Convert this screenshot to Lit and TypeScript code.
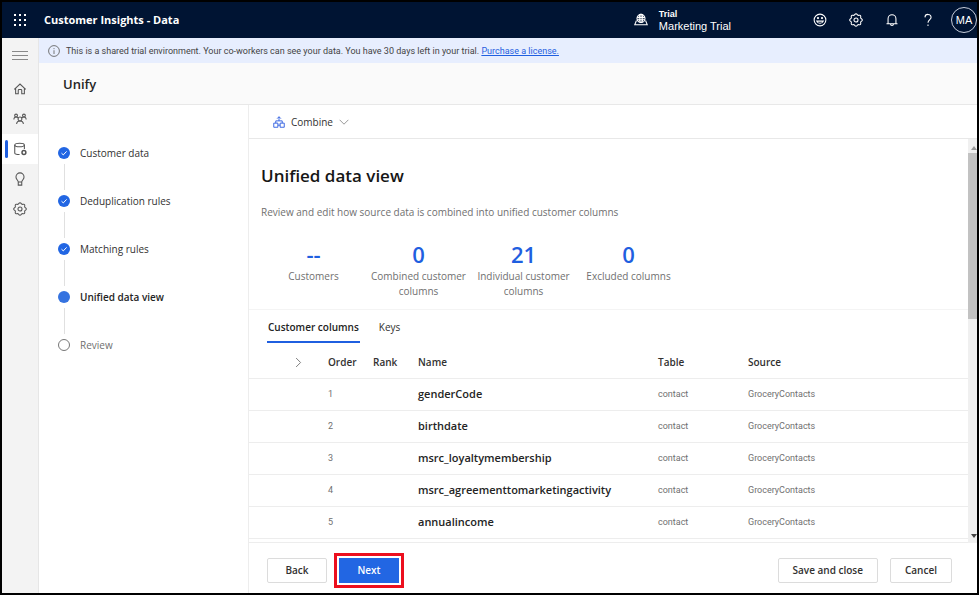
import { LitElement, html, css, svg } from "lit";
import { customElement, state } from "lit/decorators.js";
import { classMap } from "lit/directives/class-map.js";

// Outline of an eight-toothed wheel, traced as a wave around a circle.
const wheel = "M" + Array.from({ length: 64 }, (_, i) => {
  const a = (i * Math.PI) / 32;
  const r = 6.5 + 0.7 * Math.cos(8 * a);
  return `${(8 + r * Math.cos(a)).toFixed(2)} ${(8 + r * Math.sin(a)).toFixed(2)}`;
}).join("L") + "z";

const icons = {
  waffle: svg`${[2, 7, 12].map((y) => [2, 7, 12].map((x) => svg`<rect x=${x} y=${y} width="2" height="2" fill="currentColor" stroke="none"/>`))}`,
  menu: svg`<path d="M0 3.500h16M0 7.500h16M0 11.500h16"/>`,
  home: svg`<path d="M3 7v6.500h3V9.500a1 1 0 0 1 1-1h2a1 1 0 0 1 1 1v4h3V7M1.500 8.500L8 2.300l6.500 6.200"/>`,
  people: svg`<circle cx="8" cy="8" r="2.200"/><circle cx="3.500" cy="4" r="1.600"/><circle cx="12.500" cy="4" r="1.600"/><path d="M4 13.500c.3-2 1.500-3.300 4-3.300s3.700 1.300 4 3.300M1 8.500C1 6.800 2 5.600 3.500 5.600S5.700 6.500 6.300 7M15 8.500c0-1.700-1-2.900-2.500-2.900S10.300 6.500 9.700 7"/>`,
  data: svg`<ellipse cx="7.500" cy="3.500" rx="5.500" ry="2"/><path d="M2 3.500v9c0 1 1.700 1.800 5.500 1.800M13 3.500V8"/><circle cx="12.500" cy="12" r="2.200" stroke-width="1.700"/>`,
  bulb: svg`<path d="M6 11.500C6 9.500 3.400 8.500 3.400 5.600a4.600 4.600 0 0 1 9.200 0C12.600 8.500 10 9.500 10 11.500zM6 11.500V15h4v-3.500"/>`,
  gear: svg`<path d=${wheel}/><circle cx="8" cy="8" r="2.300"/>`,
  info: svg`<circle cx="8" cy="8" r="7.200"/><path d="M8 7v5M8 4.200v1.300"/>`,
  env: svg`<circle cx="8" cy="6.200" r="4.600"/><ellipse cx="8" cy="6.200" rx="2" ry="4.600"/><path d="M3.500 5h9M3.500 7.800h9M8 1.600v9.200M2.800 8.500L.8 13.500h14.400l-2-5"/>`,
  smile: svg`<circle cx="8" cy="8" r="6.700"/><path d="M4.200 9.300c1.500 3.300 6.100 3.300 7.600 0z"/><circle cx="5.700" cy="5.800" r=".6" fill="currentColor"/><circle cx="10.300" cy="5.800" r=".6" fill="currentColor"/>`,
  bell: svg`<path d="M3.500 12V6.500a4.500 4.500 0 0 1 9 0V12M1.700 12.200h12.600M6.300 12.500a1.700 1.700 0 0 0 3.400 0"/>`,
  help: svg`<path d="M4.500 5A3.500 3.500 0 0 1 8 1.600c2 0 3.500 1.200 3.500 3.400C11.500 7.500 8 7.800 8 11.200"/><path d="M8 13v1.800"/>`,
  combine: svg`<path d="M1 9.500h5.500V15H1zM9.500 9.500H15V15H9.500zM3.700 9.500V6.500h8.600v3M8 6.500V1M5.500 3.500L8 1l2.500 2.500M6.500 12.200h3"/>`,
  down: svg`<path d="M1 4.500L8 11.500l7-7"/>`,
  right: svg`<path d="M4.500 1.500L11 8l-6.500 6.500"/>`,
};
type IconName = keyof typeof icons;

@customElement("ui-icon")
class UiIcon extends LitElement {
  static properties = { name: {} };
  declare name: IconName;
  static styles = css`
    :host { display: block; flex: none; width: 14px; height: 14px; }
    svg { display: block; width: 100%; height: 100%; fill: none; stroke: currentColor; stroke-width: 1.2; }
  `;
  render() {
    return html`<svg viewBox="0 0 16 16" aria-hidden="true">${icons[this.name]}</svg>`;
  }
}

const nav: { icon: IconName; label: string }[] = [
  { icon: "home", label: "Home" },
  { icon: "people", label: "Customers" },
  { icon: "data", label: "Data" },
  { icon: "bulb", label: "Insights" },
  { icon: "gear", label: "Settings" },
];

const steps = [
  { label: "Customer data", status: "done" },
  { label: "Deduplication rules", status: "done" },
  { label: "Matching rules", status: "done" },
  { label: "Unified data view", status: "current" },
  { label: "Review", status: "todo" },
];

const stats = [
  { value: "--", label: "Customers" },
  { value: "0", label: "Combined customer columns" },
  { value: "21", label: "Individual customer columns" },
  { value: "0", label: "Excluded columns" },
];

const rows = ["genderCode", "birthdate", "msrc_loyaltymembership", "msrc_agreementtomarketingactivity", "annualincome"];

@customElement("app-root")
class AppRoot extends LitElement {
  @state() private tab = "Customer columns";

  static styles = css`
    :host {
      display: flex; flex-direction: column; box-sizing: border-box; min-height: 100vh;
      border: 2px solid #000; background: #fff; color: #323130;
      font: 10px/16px "Open Sans", "Noto Sans", sans-serif;
    }
    * { box-sizing: border-box; }
    button { font: inherit; color: inherit; background: none; border: 0; padding: 0; cursor: pointer; }
    h1, h2, p, ol { margin: 0; padding: 0; }

    .top { display: flex; align-items: center; height: 36px; background: #001433; color: #fff; }
    .waffle { width: 36px; display: grid; place-items: center; }
    .waffle ui-icon { width: 16px; height: 16px; }
    .product { flex: 1; padding-left: 6px; font-size: 11px; font-weight: 700; }
    .env { display: flex; align-items: center; gap: 11px; margin-right: 82px; font: 11px/12px "Liberation Sans", sans-serif; }
    .env b { display: block; font-size: 9px; line-height: 11px; }
    .tools { display: flex; align-items: center; gap: 22px; }
    .avatar { width: 26px; height: 26px; margin-left: -6px; border: 1px solid #c8cedb; border-radius: 50%; font: 11px/24px "Liberation Sans", sans-serif; text-align: center; }

    .body { flex: 1; display: flex; }
    .rail { flex: none; width: 37px; background: #f3f3f3; border-right: 1px solid #e6e6e6; color: #555; display: flex; flex-direction: column; }
    .rail button { height: 30px; display: grid; place-items: center; border-left: 3px solid transparent; border-right: 3px solid transparent; }
    .rail .menu { height: 36px; color: #888; }
    .rail .menu ui-icon { width: 16px; height: 16px; }
    .rail .active { position: relative; background: #fff; }
    .rail .active::before { content: ""; position: absolute; left: 0; top: 6px; width: 3px; height: 18px; border-radius: 2px; background: #1f5fe0; }

    .page { flex: 1; min-width: 0; display: flex; flex-direction: column; }
    .notice { display: flex; align-items: center; gap: 6px; height: 25px; padding-left: 9px; background: #e7eefe; color: #444; font-family: Roboto, sans-serif; font-size: 9px; }
    .notice ui-icon { width: 12px; height: 12px; color: #666; }
    .notice a { color: #1f5fe0; }
    .title { height: 42px; padding: 0 24px; background: #fafafa; border-bottom: 1px solid #e8e8e8; color: #242424; font-size: 13px; line-height: 42px; font-weight: 600; }
    .work { flex: 1; display: flex; }

    .steps { flex: none; width: 209px; padding: 40px 0 0 19px; list-style: none; }
    .step { display: grid; grid-template-columns: 12px 1fr; column-gap: 10px; align-items: center; height: 48px; grid-template-rows: 16px 32px; }
    .dot { width: 12px; height: 12px; border-radius: 50%; background: #2266e3; }
    .dot svg { display: block; fill: none; stroke: #fff; }
    .current { color: #242424; font-weight: 600; }
    .current .dot { background: #3573e0; }
    .todo { color: #707070; }
    .todo .dot { background: #fff; border: 1px solid #777; }
    .step:not(:last-child)::after { content: ""; width: 1px; height: 26px; margin-left: 6px; background: #e0e0e0; }

    .main { flex: 1; min-width: 0; display: flex; flex-direction: column; border-left: 1px solid #ededed; }
    .commands { display: flex; align-items: center; height: 34px; padding-left: 24px; border-bottom: 1px solid #e8e8e8; }
    .combine { display: flex; align-items: center; gap: 6px; }
    .combine ui-icon:first-child { width: 12px; height: 12px; color: #2b5be0; }
    .combine ui-icon:last-child { width: 10px; height: 10px; color: #777; }
    .viewport { flex: 1; display: flex; }
    .content { flex: 1; min-width: 0; border-bottom: 1px solid #ededed; }
    .intro { padding: 24px 12px 10px; border-bottom: 1px solid #f4f4f4; }
    h2 { color: #161616; font-size: 17px; line-height: 26px; font-weight: 600; }
    .intro p { padding-top: 15px; color: #707070; }
    .stats { display: flex; padding-top: 21px; }
    .stat { width: 105px; text-align: center; color: #707070; line-height: 15px; padding: 0 2px; }
    .stat strong { display: block; margin-bottom: 2px; color: #1f5fe0; font-size: 22px; line-height: 26px; font-weight: 600; }
    .tabs { display: flex; gap: 18px; padding: 0 18px; }
    .tabs button { height: 33px; padding: 2px 1px 0; border-bottom: 2px solid transparent; }
    .tabs .selected { border-color: #1f5fe0; color: #242424; font-weight: 600; }

    table { width: 100%; border-collapse: collapse; table-layout: fixed; }
    th, td { padding: 0; text-align: left; border-bottom: 1px solid #ededed; }
    th { height: 35px; padding-top: 4px; color: #323130; font-size: 10px; font-weight: 600; }
    td { height: 32px; color: #707070; font-family: Roboto, sans-serif; font-size: 9px; }
    td.name { color: #242424; font-family: inherit; font-size: 11px; font-weight: 600; }
    .c-open { width: 79px; } .c-order { width: 45px; } .c-rank { width: 45px; } .c-name { width: 240px; } .c-table { width: 90px; }
    th button { display: block; margin-left: 44px; color: #666; }
    th ui-icon { width: 11px; height: 11px; }

    .scrollbar { flex: none; width: 9px; background: #f0f0f0; display: flex; flex-direction: column; justify-content: space-between; }
    .scrollbar svg { display: block; fill: #444; }
    .scrollbar svg:first-child { fill: #999; }
    .thumb { height: 166px; margin-bottom: auto; background: #c2c2c2; }

    .footer { display: flex; align-items: center; gap: 12px; height: 50px; padding: 4px 25px 0 18px; font-weight: 600; }
    .footer button { height: 25px; padding: 0 14px; border: 1px solid #dcdcdc; border-radius: 2px; min-width: 60px; background: #fff; }
    .footer .primary { border: 0; border-radius: 0; background: #2266e3; color: #fff; outline: 3px solid #ec0f1e; outline-offset: 2px; }
    .footer .push { margin-left: auto; }
  `;

  render() {
    return html`
      <header class="top">
        <button class="waffle" aria-label="App launcher"><ui-icon name="waffle"></ui-icon></button>
        <span class="product">Customer Insights - Data</span>
        <div class="env"><ui-icon name="env"></ui-icon><span><b>Trial</b>Marketing Trial</span></div>
        <div class="tools">
          <button aria-label="Feedback"><ui-icon name="smile"></ui-icon></button>
          <button aria-label="Settings"><ui-icon name="gear"></ui-icon></button>
          <button aria-label="Notifications"><ui-icon name="bell"></ui-icon></button>
          <button aria-label="Help"><ui-icon name="help"></ui-icon></button>
          <button class="avatar">MA</button>
        </div>
      </header>
      <div class="body">
        <nav class="rail">
          <button class="menu" aria-label="Menu"><ui-icon name="menu"></ui-icon></button>
          ${nav.map((n) => html`<button class=${classMap({ active: n.icon === "data" })} aria-label=${n.label}><ui-icon name=${n.icon}></ui-icon></button>`)}
        </nav>
        <div class="page">
          <div class="notice">
            <ui-icon name="info"></ui-icon>
            <span>This is a shared trial environment. Your co-workers can see your data. You have 30 days left in your trial. <a href="#">Purchase a license.</a></span>
          </div>
          <h1 class="title">Unify</h1>
          <div class="work">
            <ol class="steps">
              ${steps.map((s) => html`<li class="step ${s.status}">
                <span class="dot">${s.status === "done" ? html`<svg viewBox="0 0 12 12"><path d="M3.500 6.200l1.800 1.700 3.300-3.500"/></svg>` : ""}</span>
                <span>${s.label}</span>
              </li>`)}
            </ol>
            <main class="main">
              <div class="commands">
                <button class="combine"><ui-icon name="combine"></ui-icon>Combine<ui-icon name="down"></ui-icon></button>
              </div>
              <div class="viewport">
                <div class="content">
                  <section class="intro">
                    <h2>Unified data view</h2>
                    <p>Review and edit how source data is combined into unified customer columns</p>
                    <div class="stats">
                      ${stats.map((s) => html`<div class="stat"><strong>${s.value}</strong>${s.label}</div>`)}
                    </div>
                  </section>
                  <div class="tabs" role="tablist">
                    ${["Customer columns", "Keys"].map((t) => html`<button role="tab" aria-selected=${this.tab === t} class=${classMap({ selected: this.tab === t })} @click=${() => (this.tab = t)}>${t}</button>`)}
                  </div>
                  <table>
                    <thead><tr>
                      <th class="c-open"><button aria-label="Expand all"><ui-icon name="right"></ui-icon></button></th>
                      <th class="c-order">Order</th><th class="c-rank">Rank</th><th class="c-name">Name</th>
                      <th class="c-table">Table</th><th>Source</th>
                    </tr></thead>
                    <tbody>
                      ${rows.map((r, i) => html`<tr><td></td><td>${i + 1}</td><td></td><td class="name">${r}</td><td>contact</td><td>GroceryContacts</td></tr>`)}
                    </tbody>
                  </table>
                </div>
                <div class="scrollbar" aria-hidden="true">
                  <svg viewBox="0 0 9 14" height="14"><path d="M3 11l3-4 3 4z"/></svg>
                  <div class="thumb"></div>
                  <svg viewBox="0 0 9 14" height="14"><path d="M3 5h6L6 9z"/></svg>
                </div>
              </div>
              <footer class="footer">
                <button>Back</button>
                <button class="primary">Next</button>
                <button class="push">Save and close</button>
                <button>Cancel</button>
              </footer>
            </main>
          </div>
        </div>
      </div>
    `;
  }
}
